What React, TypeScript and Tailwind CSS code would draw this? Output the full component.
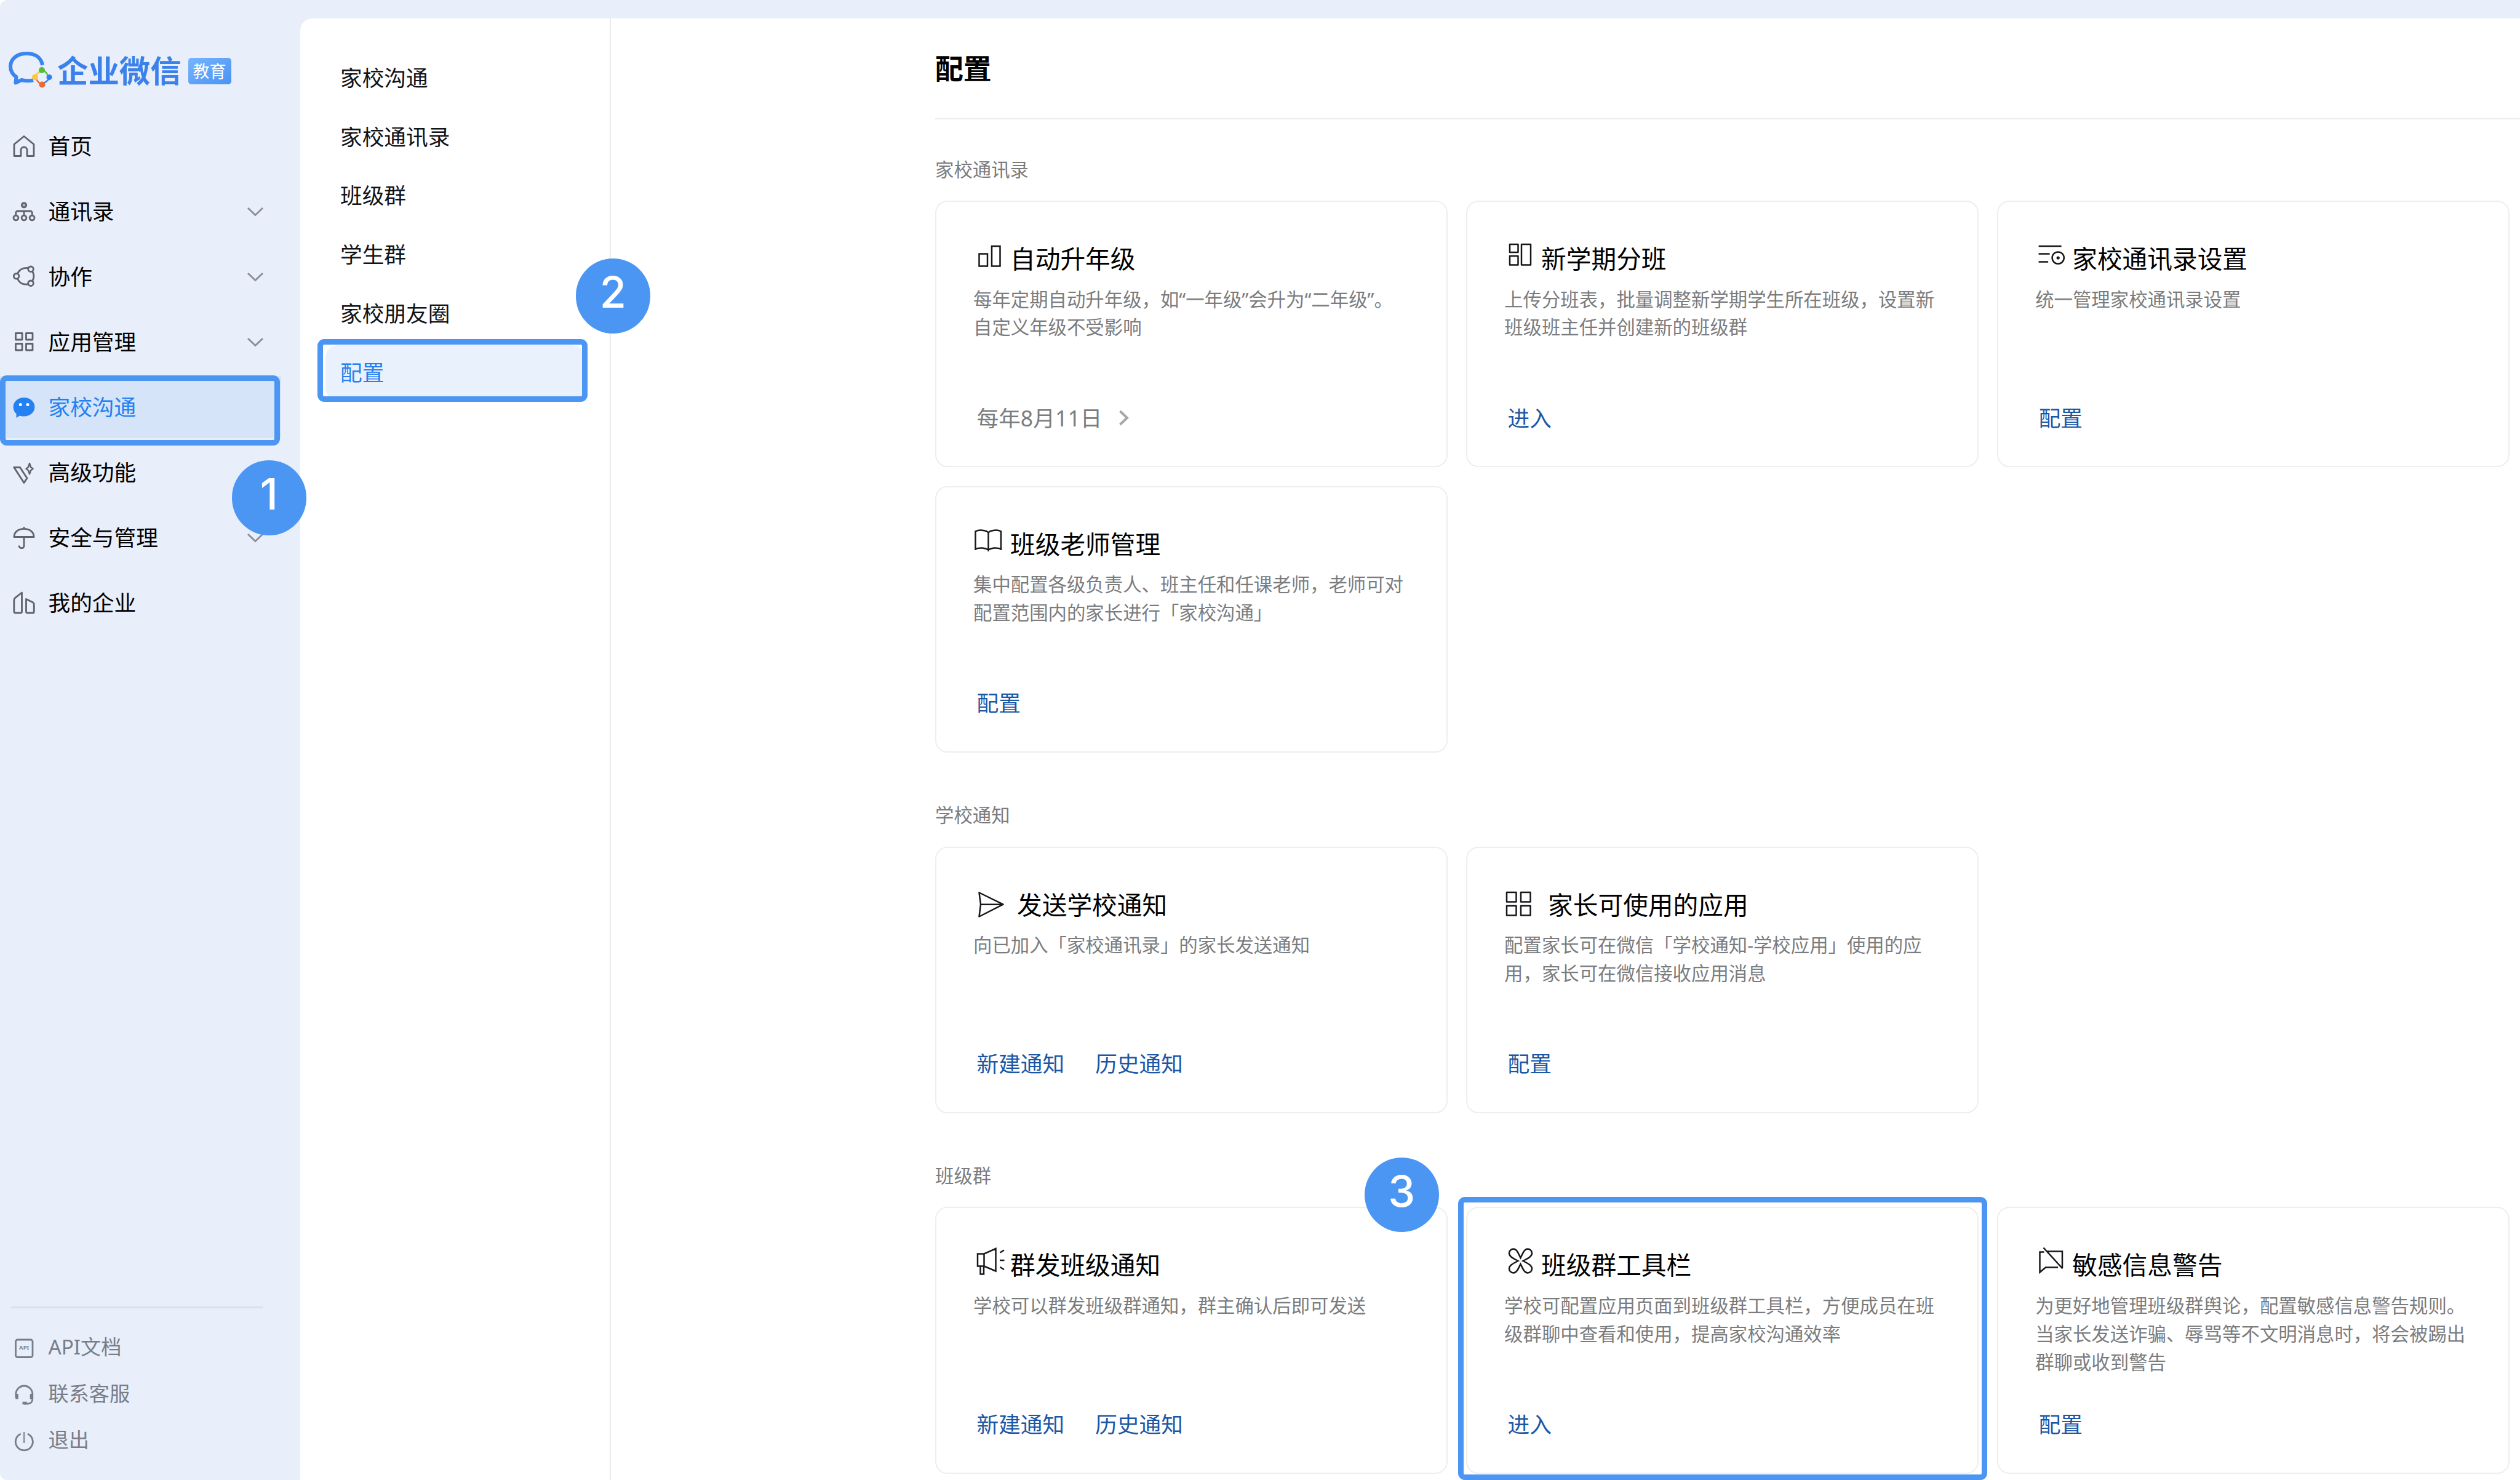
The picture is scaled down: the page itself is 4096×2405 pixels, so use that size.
import type { ReactNode } from 'react';

type NavItem = { label: string; icon: ReactNode; expandable?: boolean; active?: boolean };

type CardItem = {
  title: string;
  icon: ReactNode;
  lines: string[];
  links?: string[];
  date?: string;
  wide?: boolean;
};

function Glyph({ children }: { children: ReactNode }) {
  return (
    <svg
      className="h-[36px] w-[36px] shrink-0 overflow-visible"
      viewBox="0 0 36 36"
      fill="none"
      stroke="currentColor"
      strokeWidth="2.8"
    >
      {children}
    </svg>
  );
}

function CardGlyph({ children }: { children: ReactNode }) {
  return (
    <svg
      className="h-[48px] w-[60px] shrink-0 overflow-visible"
      viewBox="0 0 60 48"
      fill="none"
      stroke="#15171a"
      strokeWidth="2.5"
    >
      {children}
    </svg>
  );
}

function Chevron() {
  return (
    <svg className="mt-[2px] mr-[28px] ml-auto h-[18px] w-[28px]" viewBox="0 0 28 18" fill="none" stroke="#8b909b" strokeWidth="3">
      <path d="M2 3l12 11.5L26 3" />
    </svg>
  );
}

const navItems: NavItem[] = [
  {
    label: '首页',
    icon: (
      <Glyph>
        <path d="M2 15.5L18 2.5l16 13v19H23V25a5 5 0 0 0-10 0v9.5H2z" strokeLinejoin="round" />
      </Glyph>
    ),
  },
  {
    label: '通讯录',
    expandable: true,
    icon: (
      <Glyph>
        <circle cx="18" cy="8.3" r="3.7" fill="#b3b7c0" />
        <path d="M4.7 24v-3a3 3 0 0 1 3-3h20.600a3 3 0 0 1 3 3v3M18 18v6" />
        <circle cx="4.9" cy="29" r="3.9" />
        <circle cx="18" cy="29" r="3.9" />
        <circle cx="31.1" cy="29" r="3.9" />
      </Glyph>
    ),
  },
  {
    label: '协作',
    expandable: true,
    icon: (
      <Glyph>
        <circle cx="5.6" cy="17.8" r="4.3" />
        <circle cx="29" cy="6.3" r="4.3" />
        <circle cx="29" cy="29.3" r="4.3" />
        <path d="M7.5 13.500C10 8 15.500 4 24.500 4.500M7.500 22C10 28 15.500 32 24.500 31M32 10.500c2.600 5 2.600 9.500 0 14.500" />
      </Glyph>
    ),
  },
  {
    label: '应用管理',
    expandable: true,
    icon: (
      <Glyph>
        <path d="M4.500 4.500h10.500v10.500H4.500zM21.500 4.500h10.500v10.500H21.500zM4.500 21.500h10.500v10.500H4.500zM21.500 21.500h10.500v10.500H21.500z" strokeLinejoin="round" />
      </Glyph>
    ),
  },
  {
    label: '家校沟通',
    active: true,
    icon: (
      <Glyph>
        <path
          d="M18 3c9.800 0 17.400 6.600 17.400 15.300S28 33.500 18 33.500c-2.500 0-5-.3-7-1L5.500 36v-6.500C2.500 27 .6 23 .6 18.300.6 9.600 8.200 3 18 3z"
          fill="#2580f2"
          stroke="none"
        />
        <circle cx="12.3" cy="14.6" r="2.5" fill="#fff" stroke="none" />
        <circle cx="24" cy="14.6" r="2.5" fill="#fff" stroke="none" />
      </Glyph>
    ),
  },
  {
    label: '高级功能',
    icon: (
      <Glyph>
        <path d="M1.800 10.500H11.500L23 28l-5 7.500z" strokeLinejoin="round" />
        <path d="M27 4l2 6 3.500 2.700-3.500 2.700-2 6-2-6-3.500-2.700 3.500-2.700z" strokeLinejoin="round" strokeWidth="2.4" />
      </Glyph>
    ),
  },
  {
    label: '安全与管理',
    expandable: true,
    icon: (
      <Glyph>
        <path d="M1.800 17.500C2.500 9 9 4.300 18 4.300S33.500 9 34.200 17.500zM18 1v3M18 17.500V32c0 5-8 5-8-.5" strokeLinejoin="round" />
      </Glyph>
    ),
  },
  {
    label: '我的企业',
    icon: (
      <Glyph>
        <path d="M4 35c-1.500 0-2.200-1-2.200-2.200V14.500c0-2 .8-3 2-4.200L14.500 2v31c0 1.300-.7 2-2 2z" strokeLinejoin="round" />
        <path d="M21.500 12.500l10.800 5.300c1.300.7 2 2 2 3.500v11.500c0 1.300-.7 2.200-2 2.200h-8.800c-1.300 0-2-.9-2-2.200z" strokeLinejoin="round" />
      </Glyph>
    ),
  },
];

const footerItems = [
  {
    label: 'API文档',
    icon: (
      <Glyph>
        <rect x="4.5" y="6" width="27.5" height="28.5" rx="3" />
        <text x="18.2" y="22" fontSize="9.5" fontWeight="700" textAnchor="middle" fill="currentColor" stroke="none">
          API
        </text>
      </Glyph>
    ),
  },
  {
    label: '联系客服',
    icon: (
      <Glyph>
        <path d="M4.800 24v-5.500a13.500 13.500 0 0 1 27 0V26c0 5-3 8-7.500 8H18" />
        <path d="M6.500 18v8.500M30 18v8.500" strokeWidth="4.5" />
        <path d="M15.500 33h7" strokeWidth="4.5" />
      </Glyph>
    ),
  },
  {
    label: '退出',
    icon: (
      <Glyph>
        <path d="M12.800 8a14 14 0 1 0 11 0" />
        <path d="M18.200 5v18" strokeWidth="3.5" opacity=".7" />
      </Glyph>
    ),
  },
];

const subNav = ['家校沟通', '家校通讯录', '班级群', '学生群', '家校朋友圈', '配置'];

const sections: { label: string; cards: CardItem[] }[] = [
  {
    label: '家校通讯录',
    cards: [
      {
        title: '自动升年级',
        lines: ['每年定期自动升年级，如“一年级”会升为“二年级”。', '自定义年级不受影响'],
        date: '每年8月11日',
        icon: (
          <CardGlyph>
            <path d="M9.500 16.500h13.500v20H9.500zM30 4h13.500v32.500H30z" />
          </CardGlyph>
        ),
      },
      {
        title: '新学期分班',
        lines: ['上传分班表，批量调整新学期学生所在班级，设置新', '班级班主任并创建新的班级群'],
        links: ['进入'],
        icon: (
          <CardGlyph>
            <path d="M9 1h13.500v13H9zM9 20h13.500v14.500H9zM28 1h15v33.500H28z" strokeLinejoin="round" />
          </CardGlyph>
        ),
      },
      {
        title: '家校通讯录设置',
        lines: ['统一管理家校通讯录设置'],
        links: ['配置'],
        icon: (
          <CardGlyph>
            <path d="M5.600 4h37M5.600 16.500h18M5.600 29.500h15.500" />
            <circle cx="37.2" cy="23" r="9.6" />
            <circle cx="37.2" cy="23" r="2.6" fill="#15171a" stroke="none" />
          </CardGlyph>
        ),
      },
      {
        title: '班级老师管理',
        lines: ['集中配置各级负责人、班主任和任课老师，老师可对', '配置范围内的家长进行「家校沟通」'],
        links: ['配置'],
        icon: (
          <CardGlyph>
            <path d="M24.500 36V5.500C20.500 1 9 .5 3.500 3.500v30.500M24.500 5.500C28.500 1 40 .5 45 3.500v30.500M3.500 32c7-2.500 16-2 21 1.500 5-3.500 13.500-4 20.500-1.500" />
          </CardGlyph>
        ),
      },
    ],
  },
  {
    label: '学校通知',
    cards: [
      {
        title: '发送学校通知',
        wide: true,
        lines: ['向已加入「家校通讯录」的家长发送通知'],
        links: ['新建通知', '历史通知'],
        icon: (
          <CardGlyph>
            <path d="M9.500 4.500l39 19.200-39 19.800 2.500-19.800zM12 23.700h34" strokeLinejoin="round" />
          </CardGlyph>
        ),
      },
      {
        title: '家长可使用的应用',
        wide: true,
        lines: ['配置家长可在微信「学校通知-学校应用」使用的应', '用，家长可在微信接收应用消息'],
        links: ['配置'],
        icon: (
          <CardGlyph>
            <path d="M4 4h15.500v15.500H4zM27 4h15.500v15.500H27zM4 26h15.500v15.500H4zM27 26h15.500v15.500H27z" strokeLinejoin="round" />
          </CardGlyph>
        ),
      },
    ],
  },
  {
    label: '班级群',
    cards: [
      {
        title: '群发班级通知',
        lines: ['学校可以群发班级群通知，群主确认后即可发送'],
        links: ['新建通知', '历史通知'],
        icon: (
          <CardGlyph>
            <path d="M7 6.500h10.500L36.500-2v36.500L17.500 26.500H7zM17.500 6.500v20M11.500 26.500V39.500h5.500v-13" />
            <path d="M43 17h7.500M43.500 4.500L50 .5M43.500 28l6.500 4" />
          </CardGlyph>
        ),
      },
      {
        title: '班级群工具栏',
        lines: ['学校可配置应用页面到班级群工具栏，方便成员在班', '级群聊中查看和使用，提高家校沟通效率'],
        links: ['进入'],
        icon: (
          <CardGlyph>
            <path d="M22.500 18C15 14 8 11 8 5.500a7 7 0 0 1 7-7c5.500 0 8 7.500 11.500 14.500C30 6 32.500-1.500 38-1.500a7 7 0 0 1 7 7C45 11 38 14 30.500 18 38 22 45 25 45 30.500a7 7 0 0 1-7 7C32.500 37.500 30 30 26.500 23 23 30 20.500 37.500 15 37.500a7 7 0 0 1-7-7C8 25 15 22 22.500 18z" />
          </CardGlyph>
        ),
      },
      {
        title: '敏感信息警告',
        lines: ['为更好地管理班级群舆论，配置敏感信息警告规则。', '当家长发送诈骗、辱骂等不文明消息时，将会被踢出', '群聊或收到警告'],
        links: ['配置'],
        icon: (
          <CardGlyph>
            <path d="M14.500 3.500H7.500v33l9.500-8h20M20 2.500h24v26.500M13.500-3.500L44.500 30.500" />
          </CardGlyph>
        ),
      },
    ],
  },
];

function Logo() {
  return (
    <div className="flex h-[60px] items-center pl-[12px]">
      <svg className="h-[64px] w-[76px] shrink-0" viewBox="0 0 76 64" fill="none">
        <path
          d="M57 24C55 11 45 5 31 5 16 5 5 13.500 5 26c0 7.500 3.500 13 9.500 17l-1 9.500L23 48c7 1.800 13 1.800 19 .3"
          stroke="#3b85f0"
          strokeWidth="6"
          strokeLinejoin="round"
        />
        <path d="M57 32c4 1 6.500 4 8.500 8" stroke="#55bd3c" strokeWidth="2.5" />
        <path d="M68 44c-1 4-4 6.500-8 8.500" stroke="#2f7ff0" strokeWidth="2.5" />
        <path d="M56 55c-4-1-6.500-4-8.500-8" stroke="#f0672f" strokeWidth="2.5" />
        <path d="M45 43c1-4 4-6.500 8-8.500" stroke="#f8c744" strokeWidth="2.5" />
        <circle cx="56" cy="32" r="5" fill="#55bd3c" />
        <circle cx="68" cy="43.5" r="4.5" fill="#2f7ff0" />
        <circle cx="56.5" cy="55.5" r="5" fill="#f0672f" />
        <circle cx="45" cy="43.5" r="5" fill="#f8c744" />
      </svg>
      <span className="mt-[2px] ml-[5px] text-[50.4px] leading-[60px] font-bold whitespace-nowrap text-[#3b81ec]">企业微信</span>
      <span className="mt-[2px] ml-[11px] flex h-[43px] w-[70px] items-center justify-center rounded-[5px] bg-linear-to-br from-[#76b5fd] to-[#4a93f3] text-[27px] leading-none text-white">
        教育
      </span>
    </div>
  );
}

function Sidebar() {
  return (
    <aside className="flex w-[488px] shrink-0 flex-col pt-[84px]">
      <Logo />
      <nav className="mt-[42.5px] flex flex-col gap-[5px]">
        {navItems.map((item) => (
          <a
            key={item.label}
            className={
              item.active
                ? 'flex h-[101px] w-[457px] items-center bg-[#d5e4f9] pl-[21px] text-[#2580f2]'
                : 'flex h-[101px] w-[457px] items-center pl-[21px] text-[#5f636c]'
            }
          >
            {item.icon}
            <span
              className={
                item.active
                  ? 'ml-[21.500px] text-[35.7px] leading-[50px] text-[#2580f2]'
                  : 'ml-[21.500px] text-[35.7px] leading-[50px] text-black'
              }
            >
              {item.label}
            </span>
            {item.expandable && <Chevron />}
          </a>
        ))}
      </nav>
      <div className="mt-auto mb-[27px] ml-[18px] w-[409px] border-t-[3px] border-[#d9dfeb] pt-[25px]">
        {footerItems.map((item) => (
          <a key={item.label} className="flex h-[75.6px] items-center pl-[3px] text-[#787e89]">
            {item.icon}
            <span className="ml-[21.500px] text-[33.2px] leading-[46px]">{item.label}</span>
          </a>
        ))}
      </div>
    </aside>
  );
}

function SubNav() {
  return (
    <nav className="flex w-[505px] shrink-0 flex-col gap-[6.8px] border-r-[2px] border-[#ebebeb] px-[41px] pt-[52px]">
      {subNav.map((label) => (
        <a
          key={label}
          className={
            label === '配置'
              ? 'flex h-[89px] items-center rounded-[20px] bg-[#e9f1fd] pl-[24px] text-[35.7px] text-[#2580f2]'
              : 'flex h-[89px] items-center pl-[24px] text-[35.7px] text-[#111418]'
          }
        >
          {label}
        </a>
      ))}
    </nav>
  );
}

function Card({ card }: { card: CardItem }) {
  return (
    <article className="flex h-[433.3px] flex-col rounded-[20px] border-[2.5px] border-[#eeeeee] pb-[55px] pl-[60px] whitespace-nowrap">
      <div className="mt-[68px] flex h-[48px] items-center">
        {card.icon}
        <h3 className={card.wide ? 'ml-[11px] text-[40.7px] leading-[48px] text-black' : 'text-[40.7px] leading-[48px] text-black'}>
          {card.title}
        </h3>
      </div>
      <div className="mt-[19.5px] text-[30.4px] leading-[45.8px] text-[#7b7c7e]">
        {card.lines.map((line) => (
          <p key={line}>{line}</p>
        ))}
      </div>
      <div className="mt-auto flex h-[46px] items-center gap-[50px] pl-[5.5px] text-[35.7px] text-[#1c57a5]">
        {card.links?.map((link) => (
          <a key={link}>{link}</a>
        ))}
        {card.date && (
          <a className="flex items-center text-[#7b7c7e]">
            {card.date}
            <svg className="ml-[26px] h-[26px] w-[18px]" viewBox="0 0 18 26" fill="none" stroke="#a6a7a9" strokeWidth="4">
              <path d="M2.500 2l11.500 11-11.500 11" />
            </svg>
          </a>
        )}
      </div>
    </article>
  );
}

function Main() {
  return (
    <main className="min-w-0 flex-1 pl-[527px]">
      <header className="flex h-[164px] items-center border-b-[2px] border-[#eaebed]">
        <h1 className="text-[45.8px] font-bold text-black">配置</h1>
      </header>
      <div className="-mt-[20.500px]">
        {sections.map((section) => (
          <section key={section.label} className="pt-[79px]">
            <h2 className="mb-[27.500px] h-[46px] text-[30.4px] leading-[46px] text-[#7b7c7e]">{section.label}</h2>
            <div className="grid grid-cols-[832.5px_832.5px_832.5px] gap-[30.6px]">
              {section.cards.map((card) => (
                <Card key={card.title} card={card} />
              ))}
            </div>
          </section>
        ))}
      </div>
    </main>
  );
}

// Numbered tour markers and the frames they point at
function Tour() {
  return (
    <>
      <div className="absolute top-[609.5px] left-0 h-[114px] w-[455px] rounded-[11px] border-[9px] border-[#4c96f3]" />
      <div className="absolute top-[550.5px] left-[515.5px] h-[102px] w-[439.5px] rounded-[11px] border-[9px] border-[#4c96f3]" />
      <div className="absolute top-[1945px] left-[2370px] h-[460px] w-[860px] rounded-[11px] border-[9px] border-[#4c96f3]" />
      <Marker className="absolute top-[748px] left-[376.5px]" value="1" />
      <Marker className="absolute top-[420px] left-[935.5px]" value="2" />
      <Marker className="absolute top-[1880.5px] left-[2217.5px]" value="3" />
    </>
  );
}

function Marker({ className, value }: { className: string; value: string }) {
  return (
    <div className={className}>
      <div className="flex h-[121.5px] w-[121.5px] items-center justify-center rounded-full bg-[#4c96f3] pb-[11px] font-[Inter,sans-serif] text-[70px] leading-none font-medium text-white">
        {value}
      </div>
    </div>
  );
}

export default function App() {
  return (
    <div
      lang="zh-CN"
      className="relative h-[2405px] w-[4096px] overflow-hidden bg-white font-['Noto_Sans','Noto_Sans_CJK_SC',sans-serif]"
    >
      <div className="flex h-full rounded-l-[12px] bg-[#e8eefa]">
        <Sidebar />
        <div className="mt-[30px] flex min-w-0 flex-1 rounded-tl-[20px] bg-white">
          <SubNav />
          <Main />
        </div>
      </div>
      <Tour />
    </div>
  );
}
